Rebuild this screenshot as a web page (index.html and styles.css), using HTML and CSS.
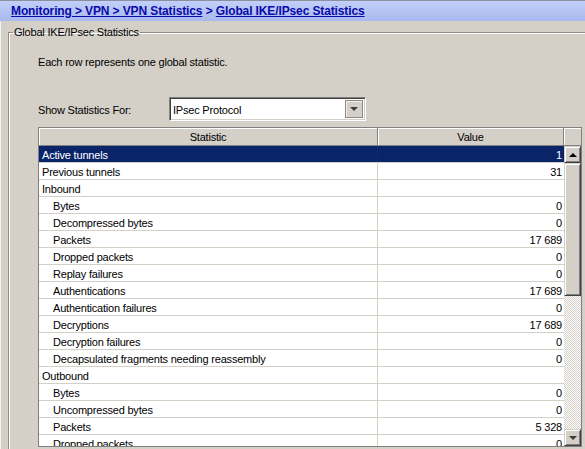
FILE: index.html
```html
<!DOCTYPE html>
<html>
<head>
<meta charset="utf-8">
<link rel="stylesheet" href="styles.css">
</head>
<body>
<div class="crumbbar">
  <a class="crumb" href="#">Monitoring &gt; VPN &gt; VPN Statistics</a><span class="sep"> &gt; </span><a class="crumb" href="#">Global IKE/IPsec Statistics</a>
</div>
<div class="content">
  <fieldset class="group">
    <legend class="group-title">Global IKE/IPsec Statistics</legend>
    <div class="group-body">
      <p class="desc">Each row represents one global statistic.</p>
      <div class="show-row">
        <span class="show-label">Show Statistics For:</span>
        <div class="combo">
          <span class="combo-text">IPsec Protocol</span>
          <span class="combo-btn"><span class="arrow-down"></span></span>
        </div>
      </div>
      <div class="grid">
        <div class="thead">
          <div class="th th-stat">Statistic</div>
          <div class="th th-val">Value</div>
          <div class="th th-corner"></div>
        </div>
        <div class="tbody">
          <div class="rows">
            <div class="row selected"><span class="c-stat">Active tunnels</span><span class="c-val">1</span></div>
            <div class="row"><span class="c-stat">Previous tunnels</span><span class="c-val">31</span></div>
            <div class="row"><span class="c-stat">Inbound</span><span class="c-val"></span></div>
            <div class="row child"><span class="c-stat">Bytes</span><span class="c-val">0</span></div>
            <div class="row child"><span class="c-stat">Decompressed bytes</span><span class="c-val">0</span></div>
            <div class="row child"><span class="c-stat">Packets</span><span class="c-val">17 689</span></div>
            <div class="row child"><span class="c-stat">Dropped packets</span><span class="c-val">0</span></div>
            <div class="row child"><span class="c-stat">Replay failures</span><span class="c-val">0</span></div>
            <div class="row child"><span class="c-stat">Authentications</span><span class="c-val">17 689</span></div>
            <div class="row child"><span class="c-stat">Authentication failures</span><span class="c-val">0</span></div>
            <div class="row child"><span class="c-stat">Decryptions</span><span class="c-val">17 689</span></div>
            <div class="row child"><span class="c-stat">Decryption failures</span><span class="c-val">0</span></div>
            <div class="row child"><span class="c-stat">Decapsulated fragments needing reassembly</span><span class="c-val">0</span></div>
            <div class="row"><span class="c-stat">Outbound</span><span class="c-val"></span></div>
            <div class="row child"><span class="c-stat">Bytes</span><span class="c-val">0</span></div>
            <div class="row child"><span class="c-stat">Uncompressed bytes</span><span class="c-val">0</span></div>
            <div class="row child"><span class="c-stat">Packets</span><span class="c-val">5 328</span></div>
            <div class="row child"><span class="c-stat">Dropped packets</span><span class="c-val">0</span></div>
          </div>
          <div class="vscroll">
            <div class="sbtn"><span class="arrow-up"></span></div>
            <div class="thumb"></div>
            <div class="track"></div>
            <div class="sbtn"><span class="arrow-down"></span></div>
          </div>
        </div>
      </div>
    </div>
  </fieldset>
</div>
</body>
</html>
```

FILE: styles.css
```css
html, body {
  margin: 0;
  padding: 0;
}
body {
  width: 585px;
  height: 449px;
  overflow: hidden;
  background: #d4d0c8;
  font-family: "Liberation Sans", Arial, sans-serif;
  font-size: 11px;
  letter-spacing: -0.2px;
  color: #000;
}
.crumbbar {
  height: 20px;
  border-top: 1px solid #8c909c;
  background: linear-gradient(#c2cff9, #a9b9ee);
  padding-left: 11px;
  line-height: 21px;
  white-space: nowrap;
  font-weight: bold;
  font-size: 12px;
  letter-spacing: -0.12px;
  color: #0a0aa8;
}
.crumb {
  color: #0a0aa8;
  text-decoration: underline;
}
.sep {
  color: #0a0aa8;
}
.content {
  height: 428px;
  border-left: 1px solid #f4f3f0;
  padding-top: 5px;
  box-sizing: border-box;
}
.group {
  margin: 0 -30px 0 7px;
  padding: 0 0 0 4px;
  border: 1px solid #8f8c86;
  box-shadow: inset 1px 1px 0 #fff, 1px 1px 0 #fff;
  min-width: 0;
  height: 500px;
}
.group-title {
  padding: 0 1px;
  line-height: 13px;
}
.group-body {
  padding-left: 25px;
}
.desc {
  margin: 17px 0 0;
  line-height: 13px;
}
.show-row {
  margin-top: 28px;
  display: flex;
  align-items: center;
  height: 24px;
}
.show-label {
  width: 131px;
  padding-top: 1px;
}
.combo {
  width: 197px;
  height: 24px;
  box-sizing: border-box;
  background: #fff;
  border: 1px solid;
  border-color: #808080 #fff #fff #808080;
  box-shadow: inset 1px 1px 0 #404040, inset -1px -1px 0 #d4d0c8;
  display: flex;
  align-items: center;
  padding: 2px;
}
.combo-text {
  flex: 1;
  padding-left: 1px;
  padding-top: 1px;
}
.combo-btn {
  width: 18px;
  height: 18px;
  box-sizing: border-box;
  background: #d4d0c8;
  border: 1px solid #8d8a84;
  box-shadow: inset 1px 1px 0 #f2f1ee;
  display: flex;
  align-items: center;
  justify-content: center;
}
.arrow-down {
  width: 0;
  height: 0;
  border-left: 4px solid transparent;
  border-right: 4px solid transparent;
  border-top: 4px solid #3c3c3c;
}
.arrow-up {
  width: 0;
  height: 0;
  border-left: 4px solid transparent;
  border-right: 4px solid transparent;
  border-bottom: 4px solid #000;
}
.grid {
  margin-top: 6px;
  width: 544px;
  height: 320px;
  box-sizing: border-box;
  border: 1px solid #808080;
  background: #fff;
  display: flex;
  flex-direction: column;
}
.thead {
  display: flex;
  height: 18px;
  flex: none;
}
.th {
  box-sizing: border-box;
  height: 18px;
  background: #d4d0c8;
  border-right: 1px solid #808080;
  border-bottom: 1px solid #808080;
  box-shadow: inset 1px 1px 0 #fff;
  text-align: center;
  line-height: 18px;
}
.th-stat { width: 339px; }
.th-val { width: 186px; }
.th-corner { width: 17px; border-right: none; }
.tbody {
  display: flex;
  height: 300px;
}
.rows {
  width: 525px;
  height: 300px;
  overflow: hidden;
}
.row {
  display: flex;
  height: 17px;
  box-sizing: border-box;
  border-bottom: 1px solid #d4d0c8;
  line-height: 18px;
  white-space: nowrap;
}
.c-stat {
  width: 339px;
  height: 16px;
  box-sizing: border-box;
  border-right: 1px solid #d4d0c8;
  padding-left: 3px;
}
.row.child .c-stat {
  padding-left: 14px;
}
.c-val {
  width: 186px;
  box-sizing: border-box;
  text-align: right;
  padding-right: 2px;
}
.row.selected {
  background: #0a246a;
  color: #fff;
}
.row.selected .c-stat {
  border-right-color: #0d2a74;
}
.vscroll {
  width: 17px;
  height: 300px;
  display: flex;
  flex-direction: column;
}
.sbtn {
  height: 17px;
  flex: none;
  box-sizing: border-box;
  background: #d4d0c8;
  border: 1px solid;
  border-color: #d4d0c8 #404040 #404040 #d4d0c8;
  box-shadow: inset 1px 1px 0 #fff, inset -1px -1px 0 #808080;
  display: flex;
  align-items: center;
  justify-content: center;
}
.thumb {
  height: 133px;
  flex: none;
  box-sizing: border-box;
  background: #d4d0c8;
  border: 1px solid;
  border-color: #d4d0c8 #404040 #404040 #d4d0c8;
  box-shadow: inset 1px 1px 0 #fff, inset -1px -1px 0 #808080;
}
.track {
  flex: 1;
  background: repeating-conic-gradient(#fff 0 25%, #d4d0c8 0 50%) 0 0 / 2px 2px;
}
```
